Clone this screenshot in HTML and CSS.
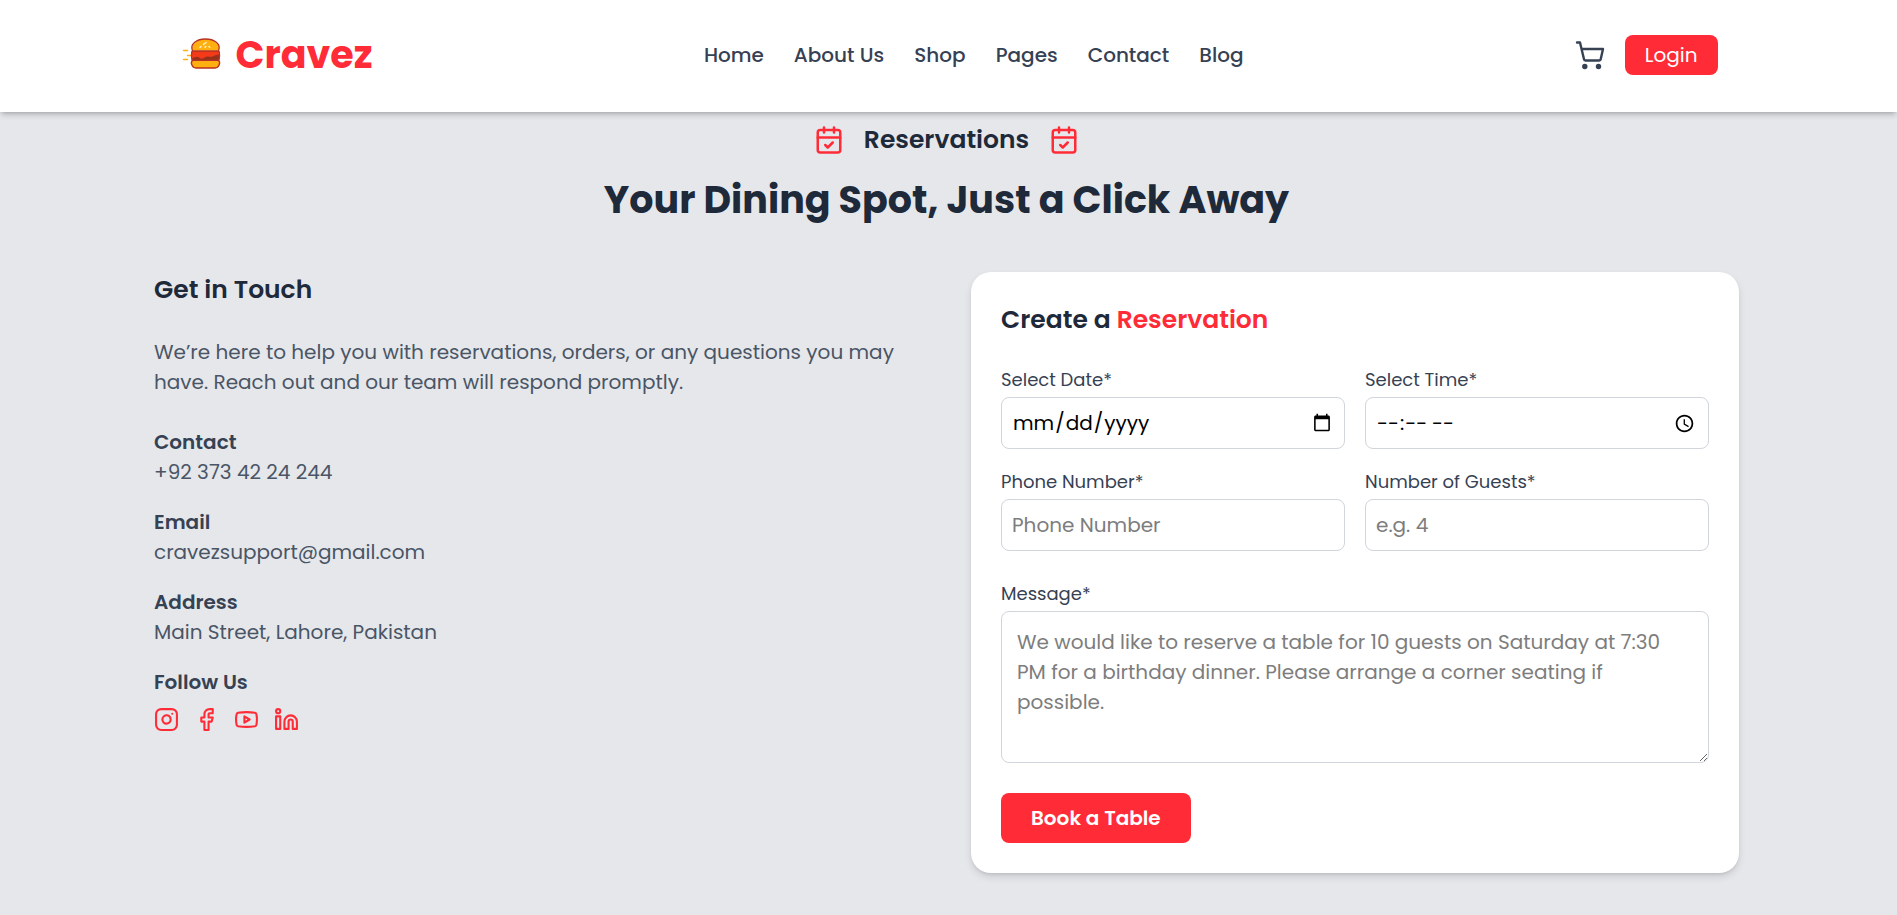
FILE: index.html
```html
<!DOCTYPE html>
<html lang="en">
<head>
<meta charset="utf-8">
<meta name="viewport" content="width=device-width, initial-scale=1">
<title>Cravez – Reservations</title>
<link rel="stylesheet" href="styles.css">
</head>
<body>
<header class="site-header">
  <div class="header-inner">
    <a class="brand" href="#">
      <svg class="brand-icon" viewBox="0 -1 48 48" aria-hidden="true">
        <g fill="none" stroke="#ffaf0f" stroke-width="1.4" stroke-linecap="round"><path d="M7.500 18.500h4M11.500 23.500h4M7.500 27.500h4"/></g>
        <path d="M15.500 18.500C16 11 22 7 29.500 7S43 11 43.500 18.500z" fill="#ffaf0f"/>
        <path d="M15.500 19h28v11h-28z" fill="#96321c"/>
        <path d="M15.500 19.500h28v3.500c-3-.5-4.500.5-7 1.500-3 1-4-1-7 .5-3 1.500-4 2.500-6 .8-2.500-2-4-.3-8 .7z" fill="#f53a19"/>
        <path d="M15.500 28.500h28v3.500a4 4 0 0 1-4 4h-20a4 4 0 0 1-4-4z" fill="#ffaf0f"/>
        <path d="M16.500 18.800C13.500 12 21 7 29.500 7S45.500 12 42.500 18.800zM16.500 19c-1.500 1.500-1.500 8 .3 9.400h25.400c1.800-1.400 1.800-7.900.3-9.400M16.800 28.500c-3 1.500-.8 7.500 3.200 7.500h19c4 0 6.200-6 3.200-7.500" fill="none" stroke="#b83221" stroke-width="1.300"/>
        <path d="M24 15.500l1-1M27.500 12.500l1-1M29.500 11l.6-.5M29 15.300l.8-.8M33 14.500l.7.8" stroke="#fff3c4" stroke-width="1.500" stroke-linecap="round"/>
      </svg>
      <span>Cravez</span>
    </a>
    <nav class="main-nav" aria-label="Main">
      <a href="#">Home</a>
      <a href="#">About Us</a>
      <a href="#">Shop</a>
      <a href="#">Pages</a>
      <a href="#">Contact</a>
      <a href="#">Blog</a>
    </nav>
    <div class="header-actions">
      <a class="cart" href="#" aria-label="Cart">
        <svg viewBox="0 0 30 30" aria-hidden="true"><g fill="none" stroke="currentColor" stroke-width="2.400" stroke-linecap="round" stroke-linejoin="round"><path d="M2 2.500H5L9 19.300a1.500 1.500 0 0 0 1.500 1.200h13.700a1.500 1.500 0 0 0 1.500-1.200L28 9H6.500"/></g><circle cx="9.800" cy="26.500" r="2.700" fill="currentColor"/><circle cx="23.500" cy="26.500" r="2.700" fill="currentColor"/></svg>
      </a>
      <button class="login" type="button">Login</button>
    </div>
  </div>
</header>

<main class="page">
  <div class="section-tag">
    <svg class="line-icon" viewBox="0 0 24 24" aria-hidden="true"><path d="M8 2v4M16 2v4"/><rect x="3" y="4" width="18" height="18" rx="2"/><path d="M3 10h18M9 16l2 2 4-4"/></svg>
    <p>Reservations</p>
    <svg class="line-icon" viewBox="0 0 24 24" aria-hidden="true"><path d="M8 2v4M16 2v4"/><rect x="3" y="4" width="18" height="18" rx="2"/><path d="M3 10h18M9 16l2 2 4-4"/></svg>
  </div>
  <h1 class="title">Your Dining Spot, Just a Click Away</h1>

  <div class="columns">
    <section class="info">
      <h2 class="subtitle">Get in Touch</h2>
      <p class="intro">We’re here to help you with reservations, orders, or any questions you may have. Reach out and our team will respond promptly.</p>
      <div class="details">
        <div><h3>Contact</h3><p>+92 373 42 24 244</p></div>
        <div><h3>Email</h3><p>cravezsupport@gmail.com</p></div>
        <div><h3>Address</h3><p>Main Street, Lahore, Pakistan</p></div>
        <div>
          <h3>Follow Us</h3>
          <div class="social">
            <a href="#" aria-label="Instagram"><svg class="line-icon" viewBox="0 0 24 24" aria-hidden="true"><rect x="2" y="2" width="20" height="20" rx="5"/><path d="M16 11.370A4 4 0 1 1 12.630 8 4 4 0 0 1 16 11.370zM17.500 6.500h.01"/></svg></a>
            <a href="#" aria-label="Facebook"><svg class="line-icon" viewBox="0 0 24 24" aria-hidden="true"><path d="M18 2h-3a5 5 0 0 0-5 5v3H7v4h3v8h4v-8h3l1-4h-4V7a1 1 0 0 1 1-1h3z"/></svg></a>
            <a href="#" aria-label="YouTube"><svg class="line-icon" viewBox="0 0 24 24" aria-hidden="true"><path d="M2.500 17a24.120 24.120 0 0 1 0-10 2 2 0 0 1 1.400-1.400 49.560 49.560 0 0 1 16.200 0A2 2 0 0 1 21.500 7a24.120 24.120 0 0 1 0 10 2 2 0 0 1-1.400 1.400 49.550 49.550 0 0 1-16.200 0A2 2 0 0 1 2.500 17"/><path d="m10 15 5-3-5-3z"/></svg></a>
            <a href="#" aria-label="LinkedIn"><svg class="line-icon" viewBox="0 0 24 24" aria-hidden="true"><path d="M16 8a6 6 0 0 1 6 6v7h-4v-7a2 2 0 0 0-4 0v7h-4v-7a6 6 0 0 1 6-6z"/><rect x="2" y="9" width="4" height="12"/><circle cx="4" cy="4" r="2"/></svg></a>
          </div>
        </div>
      </div>
    </section>

    <form class="card">
      <h2 class="subtitle">Create a <span class="accent">Reservation</span></h2>
      <div class="field-grid">
        <div class="field"><label for="date">Select Date*</label><input id="date" type="date"></div>
        <div class="field"><label for="time">Select Time*</label><input id="time" type="time"></div>
        <div class="field"><label for="phone">Phone Number*</label><input id="phone" type="tel" placeholder="Phone Number"></div>
        <div class="field"><label for="guests">Number of Guests*</label><input id="guests" type="number" placeholder="e.g. 4"></div>
      </div>
      <div class="field"><label for="message">Message*</label><textarea id="message" rows="4" placeholder="We would like to reserve a table for 10 guests on Saturday at 7:30 PM for a birthday dinner. Please arrange a corner seating if possible."></textarea></div>
      <button class="submit" type="button">Book a Table</button>
    </form>
  </div>
</main>
</body>
</html>
```
FILE: styles.css
```css
:root {
  --red: #ff2c37;
  --ink: #1e2939;
  --slate: #364153;
  --muted: #4a5565;
  --line: #d1d5dc;
}

* { box-sizing: border-box; }

body {
  margin: 0;
  background: #e5e7eb;
  color: var(--ink);
  font: 400 20px/30px Poppins, Inter, sans-serif;
}

h1, h2, h3, p { margin: 0; }
a { color: inherit; text-decoration: none; }
svg { display: block; }
button, input, textarea { font: inherit; }
button { border: 0; cursor: pointer; }

.site-header {
  position: relative;
  padding: 0 4px 2px 0;
  background: #fff;
  box-shadow: 0 4px 6px -1px rgb(0 0 0 / 18%), 0 2px 4px -2px rgb(0 0 0 / 18%);
}

.header-inner {
  display: flex;
  align-items: center;
  justify-content: space-between;
  max-width: 1542px;
  min-height: 110px;
  margin: 0 auto;
}

.brand {
  display: flex;
  align-items: center;
  gap: 12px;
  color: var(--red);
  font-size: 38px;
  font-weight: 700;
  line-height: 44px;
}

.brand-icon { width: 48px; height: 48px; }

.main-nav {
  display: flex;
  gap: 30px;
  color: var(--slate);
  font-weight: 500;
}

.header-actions {
  display: flex;
  align-items: center;
  gap: 20px;
}

.cart { color: var(--slate); }
.cart svg { width: 30px; height: 30px; }

.login {
  padding: 5px 20px;
  border-radius: 8px;
  background: var(--red);
  color: #fff;
}

.page { padding: 10px 4px 40px 0; }

.section-tag {
  display: flex;
  align-items: center;
  justify-content: center;
  gap: 20px;
  margin-bottom: 20px;
  font-size: 25px;
  font-weight: 600;
  line-height: 35px;
}

.line-icon {
  width: 25px;
  height: 25px;
  fill: none;
  stroke: var(--red);
  stroke-width: 2;
  stroke-linecap: round;
  stroke-linejoin: round;
}

.section-tag .line-icon { width: 30px; height: 30px; }

.title {
  margin-bottom: 50px;
  font-size: 38px;
  font-weight: 700;
  line-height: 45px;
  text-align: center;
}

.columns {
  display: grid;
  grid-template-columns: 1fr 1fr;
  align-items: start;
  gap: 49px;
  max-width: 1585px;
  margin: 0 auto;
}

.subtitle {
  margin-bottom: 30px;
  font-size: 25px;
  font-weight: 600;
  line-height: 35px;
}

.accent { color: var(--red); }

.intro { margin-bottom: 30px; color: var(--muted); }

.details { display: grid; gap: 20px; color: var(--muted); }

.details h3 {
  color: var(--slate);
  font-size: 20px;
  font-weight: 600;
}

.social { display: flex; gap: 15px; margin-top: 10px; }

.card {
  display: flex;
  flex-direction: column;
  align-items: stretch;
  gap: 30px;
  padding: 30px;
  border-radius: 20px;
  background: #fff;
  box-shadow: 0 4px 8px -1px rgb(0 0 0 / 14%), 0 2px 4px -2px rgb(0 0 0 / 14%);
}

.card .subtitle { margin: 0; }

.field-grid {
  display: grid;
  grid-template-columns: 1fr 1fr;
  gap: 20px;
}

.field {
  display: flex;
  flex-direction: column;
  gap: 5px;
  color: var(--slate);
}

.field label { font-size: 18px; line-height: 25px; }

.field input,
.field textarea {
  width: 100%;
  border: 1px solid var(--line);
  border-radius: 8px;
  background: #fff;
  color: #000;
}

.field input { height: 52px; padding: 10px; }
.field textarea { display: block; padding: 15px; }
.field ::placeholder { color: #7d7d7d; opacity: 1; }

.submit {
  align-self: flex-start;
  padding: 10px 30px;
  border-radius: 8px;
  background: var(--red);
  color: #fff;
  font-weight: 600;
}

@media (max-width: 900px) {
  .header-inner { flex-wrap: wrap; gap: 20px; padding: 20px; }
  .main-nav { flex-wrap: wrap; }
  .page { padding: 10px 20px 40px; }
  .columns, .field-grid { grid-template-columns: 1fr; }
}
```
